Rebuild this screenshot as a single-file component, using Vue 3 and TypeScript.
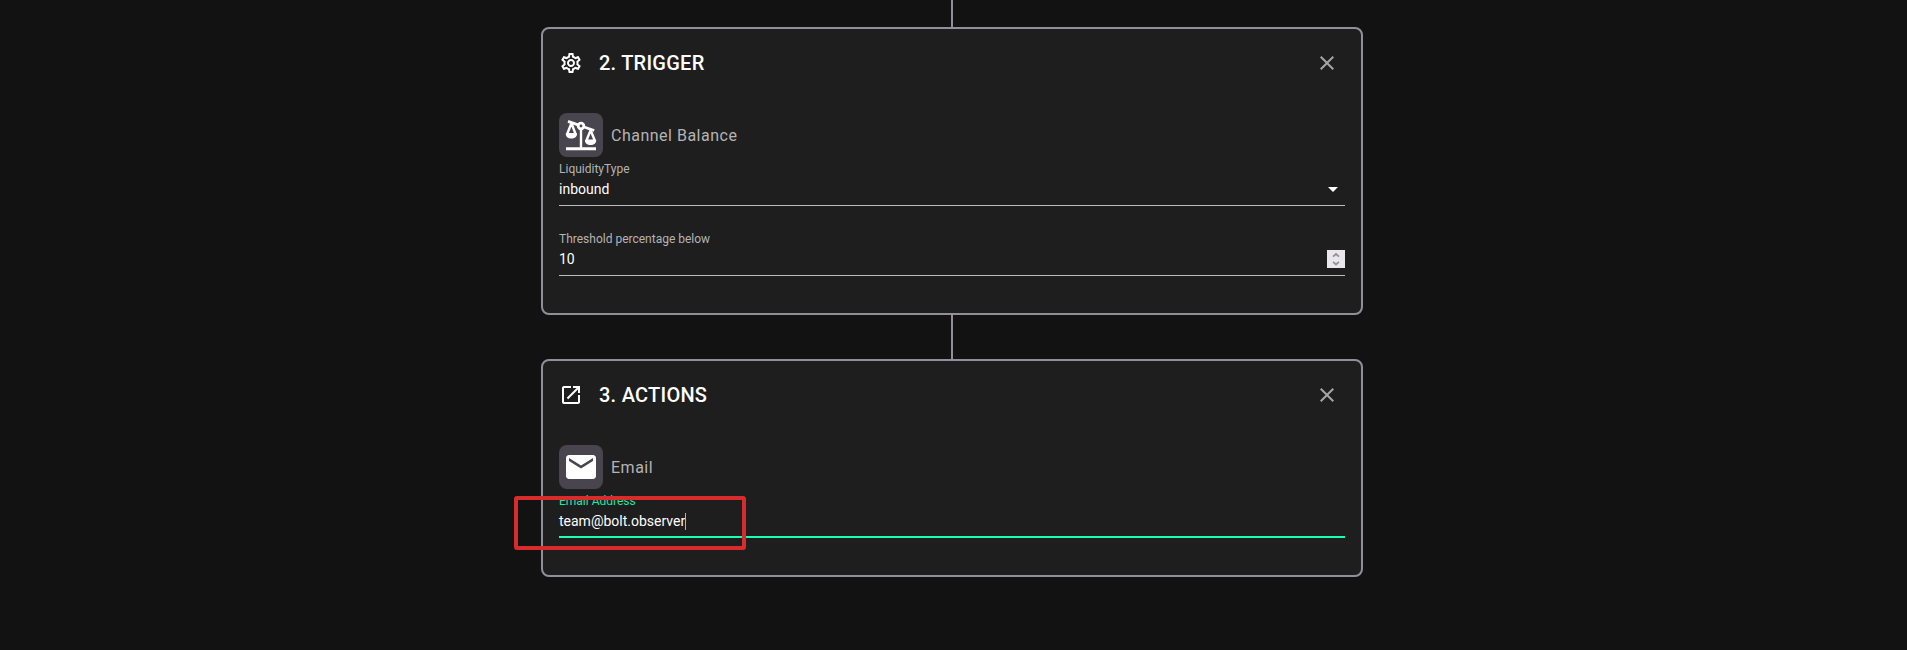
<script setup lang="ts">
import { ref } from 'vue'

const liquidityType = ref('inbound')
const threshold = ref('10')
const email = ref('team@bolt.observer')
</script>

<template>
  <main class="page">
    <div class="flow">
      <div class="connector lead"></div>
      <section class="card trigger">
        <header class="head">
          <svg class="head-icon" viewBox="0 0 24 24">
            <path d="M19.43 12.98c.04-.32.07-.64.07-.98 0-.34-.03-.66-.07-.98l2.11-1.65c.19-.15.24-.42.12-.64l-2-3.46c-.09-.16-.26-.25-.44-.25-.06 0-.12.01-.17.03l-2.49 1c-.52-.4-1.08-.73-1.69-.98l-.38-2.65C14.46 2.18 14.25 2 14 2h-4c-.25 0-.46.18-.49.42l-.38 2.65c-.61.25-1.17.59-1.69.98l-2.49-1c-.06-.02-.12-.03-.18-.03-.17 0-.34.09-.43.25l-2 3.46c-.13.22-.07.49.12.64l2.11 1.65c-.04.32-.07.65-.07.98 0 .33.03.66.07.98l-2.11 1.65c-.19.15-.24.42-.12.64l2 3.46c.09.16.26.25.44.25.06 0 .12-.01.17-.03l2.49-1c.52.4 1.08.73 1.69.98l.38 2.65c.03.24.24.42.49.42h4c.25 0 .46-.18.49-.42l.38-2.65c.61-.25 1.17-.59 1.69-.98l2.49 1c.06.02.12.03.18.03.17 0 .34-.09.43-.25l2-3.46c.12-.22.07-.49-.12-.64l-2.11-1.65zm-1.98-1.71c.04.31.05.52.05.73 0 .21-.02.43-.05.73l-.14 1.13.89.7 1.08.84-.7 1.21-1.27-.51-1.04-.42-.9.68c-.43.32-.84.56-1.25.73l-1.06.43-.16 1.13-.2 1.35h-1.4l-.19-1.35-.16-1.13-1.06-.43c-.43-.18-.83-.41-1.23-.71l-.91-.7-1.06.43-1.27.51-.7-1.21 1.08-.84.89-.7-.14-1.13c-.03-.31-.05-.54-.05-.74s.02-.43.05-.73l.14-1.13-.89-.7-1.08-.84.7-1.21 1.27.51 1.04.42.9-.68c.43-.32.84-.56 1.25-.73l1.06-.43.16-1.13.2-1.35h1.39l.19 1.35.16 1.13 1.06.43c.43.18.83.41 1.23.71l.91.7 1.06-.43 1.27-.51.7 1.21-1.07.85-.89.7.14 1.13zM12 8c-2.21 0-4 1.79-4 4s1.79 4 4 4 4-1.79 4-4-1.79-4-4-4zm0 6c-1.1 0-2-.9-2-2s.9-2 2-2 2 .9 2 2-.9 2-2 2z" />
          </svg>
          <h2>2. TRIGGER</h2>
          <svg class="close" viewBox="0 0 24 24"><path d="M19 6.41 17.59 5 12 10.59 6.41 5 5 6.41 10.59 12 5 17.59 6.41 19 12 13.41 17.59 19 19 17.59 13.41 12z" /></svg>
        </header>
        <div class="kind">
          <span class="tile">
            <svg viewBox="0 0 36 36">
              <path d="M3 30.2h30v3H3zM16.8 12.5h2.4v18h-2.4z" />
              <path class="beam" d="M5 4.4 15 7.9M21 10 31.2 13.5" />
              <circle class="beam" cx="18" cy="9" r="2.8" />
              <path class="pan" d="M8.4 6.2 4.1 17.2h8.6zM27.6 13.2l-4.3 10.6h8.6z" />
              <path d="M2.8 16.4H14c.2 3-2.2 5-5.6 5s-5.8-2-5.6-5zM22 23h11.2c.2 3-2.2 5-5.6 5s-5.8-2-5.6-5z" />
            </svg>
          </span>
          <span>Channel Balance</span>
        </div>
        <div class="field">
          <label>LiquidityType</label>
          <div class="value">{{ liquidityType }}</div>
          <svg class="arrow" viewBox="0 0 10 5"><path d="M0 0h10L5 5z" /></svg>
        </div>
        <div class="field">
          <label>Threshold percentage below</label>
          <div class="value">{{ threshold }}</div>
          <svg class="spinner" viewBox="0 0 18 18">
            <path d="M6 6.6 9 4l3 2.6M6 11.9l3 2.6 3-2.6" />
          </svg>
        </div>
      </section>
      <div class="connector"></div>
      <section class="card actions">
        <header class="head">
          <svg class="head-icon" viewBox="0 0 24 24"><path d="M19 19H5V5h7V3H5c-1.11 0-2 .9-2 2v14c0 1.1.89 2 2 2h14c1.1 0 2-.9 2-2v-7h-2v7zM14 3v2h3.59l-9.83 9.83 1.41 1.41L19 6.41V10h2V3h-7z" /></svg>
          <h2>3. ACTIONS</h2>
          <svg class="close" viewBox="0 0 24 24"><path d="M19 6.41 17.59 5 12 10.59 6.41 5 5 6.41 10.59 12 5 17.59 6.41 19 12 13.41 17.59 19 19 17.59 13.41 12z" /></svg>
        </header>
        <div class="kind">
          <span class="tile">
            <svg viewBox="0 0 24 24"><path d="M20 4H4c-1.1 0-1.99.9-1.99 2L2 18c0 1.1.9 2 2 2h16c1.1 0 2-.9 2-2V6c0-1.1-.9-2-2-2zm0 4-8 5-8-5V6l8 5 8-5v2z" /></svg>
          </span>
          <span>Email</span>
        </div>
        <div class="field focused">
          <label>Email Address</label>
          <div class="value">{{ email }}<i class="caret"></i></div>
        </div>
        <div class="highlight"></div>
      </section>
    </div>
  </main>
</template>

<style>
body {
  margin: 0;
  background: #121212;
}
</style>

<style scoped>
.page {
  height: 650px;
  overflow: hidden;
  background: #121212;
  color: #fff;
  font-family: Roboto, sans-serif;
}
.flow {
  display: flex;
  flex-direction: column;
  align-items: center;
  width: 822px;
  margin-left: 541px;
}
.connector {
  width: 2px;
  height: 44px;
  background: #938f99;
}
.lead {
  height: 27px;
}
.card {
  position: relative;
  box-sizing: border-box;
  width: 822px;
  padding: 22px 16px 0;
  border: 2px solid #938f99;
  border-radius: 8px;
  background: #1e1e1e;
}
.trigger {
  height: 288px;
}
.actions {
  height: 218px;
}
.head {
  display: flex;
  align-items: center;
  height: 24px;
}
.head-icon {
  width: 24px;
  height: 24px;
  margin-right: 16px;
  fill: #fff;
}
h2 {
  flex: 1;
  margin: 0;
  font-size: 20px;
  font-weight: 500;
  line-height: 24px;
  letter-spacing: 0.25px;
}
.close {
  width: 24px;
  height: 24px;
  margin-right: 6px;
  fill: #a5a5a5;
}
.kind {
  display: flex;
  align-items: center;
  gap: 8px;
  height: 44px;
  margin-top: 38px;
  color: #b4b4b4;
  font-size: 16px;
  letter-spacing: 0.5px;
}
.tile {
  display: flex;
  align-items: center;
  justify-content: center;
  width: 44px;
  height: 44px;
  border-radius: 8px;
  background: #49454f;
}
.tile svg {
  width: 36px;
  height: 36px;
  fill: #fff;
}
.tile .beam,
.tile .pan {
  fill: none;
  stroke: #fff;
  stroke-width: 2.8;
}
.tile .pan {
  stroke-width: 2.4;
  stroke-linejoin: round;
}
.field {
  position: relative;
  box-sizing: border-box;
  height: 49px;
  padding-top: 5px;
  border-bottom: 1px solid #bcbcbc;
}
.field + .field {
  margin-top: 21px;
}
label {
  display: block;
  height: 14px;
  color: #b4b4b4;
  font-size: 12px;
  line-height: 14px;
}
.value {
  display: flex;
  align-items: center;
  height: 20px;
  margin-top: 3px;
  font-size: 14px;
  line-height: 20px;
}
.arrow {
  position: absolute;
  top: 30px;
  right: 7px;
  width: 10px;
  height: 5px;
  fill: #fff;
}
.spinner {
  position: absolute;
  top: 23px;
  right: 0;
  width: 18px;
  height: 18px;
  background: #e9e7ec;
  fill: none;
  stroke: #938f99;
  stroke-width: 1.8;
}
.field.focused {
  border-bottom: 2px solid #1dffb4;
}
.focused label {
  color: #1de9a4;
}
.caret {
  width: 1px;
  height: 17px;
  background: #1dffb4;
}
.highlight {
  position: absolute;
  top: 135px;
  left: -29px;
  box-sizing: border-box;
  width: 232px;
  height: 54px;
  border: 4px solid #d82b2b;
  border-radius: 3px;
}
</style>
